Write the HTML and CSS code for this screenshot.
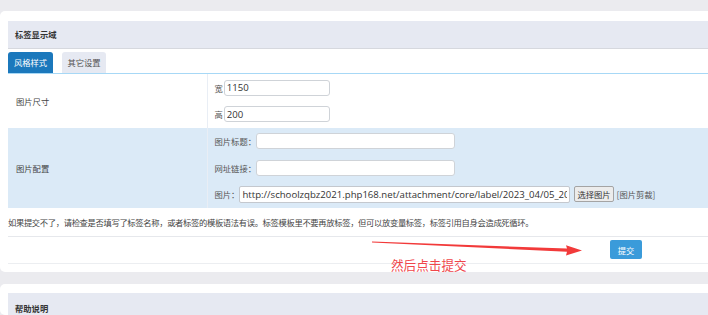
FILE: index.html
```html
<!DOCTYPE html>
<html lang="zh-CN">
<head>
<meta charset="utf-8">
<title>标签显示域</title>
<link rel="stylesheet" href="styles.css">
</head>
<body>
<div class="page">
  <section class="panel">
    <div class="panel-head">标签显示域</div>
    <div class="tabs">
      <div class="tab active">风格样式</div>
      <div class="tab">其它设置</div>
    </div>
    <table class="form">
      <tr class="row-white">
        <td class="label">图片尺寸</td>
        <td class="field">
          <div class="line"><span class="lbl">宽</span><input class="inp inp-sm" type="text" value="1150"></div>
          <div class="line"><span class="lbl">高</span><input class="inp inp-sm" type="text" value="200"></div>
        </td>
      </tr>
      <tr class="row-blue">
        <td class="label">图片配置</td>
        <td class="field">
          <div class="line"><span class="lbl">图片标题：</span><input class="inp inp-md" type="text" value=""></div>
          <div class="line"><span class="lbl">网址链接：</span><input class="inp inp-md" type="text" value=""></div>
          <div class="line"><span class="lbl">图片：</span><input class="inp inp-lg" type="text" value="http://schoolzqbz2021.php168.net/attachment/core/label/2023_04/05_20"><button class="pick" type="button">选择图片</button><span class="crop">[图片剪裁]</span></div>
        </td>
      </tr>
    </table>
    <div class="note">如果提交不了，请检查是否填写了标签名称，或者标签的模板语法有误。标签模板里不要再放标签，但可以放变量标签，标签引用自身会造成死循环。</div>
    <div class="submit-row"><button class="submit" type="button">提交</button></div>
  </section>
  <section class="panel panel-help">
    <div class="panel-head">帮助说明</div>
  </section>

  <svg class="arrow" width="708" height="315" viewBox="0 0 708 315" aria-hidden="true">
    <polygon points="372,241.6 567,248.6 566,245.3 582,250.5 566,255.6 567,251.8 372,242.4" fill="#f23a3a"/>
  </svg>
  <div class="annot">然后点击提交</div>
</div>
</body>
</html>
```
FILE: styles.css
```css
html, body {
  margin: 0;
  padding: 0;
}
body {
  background: #ebebef;
  overflow: hidden;
  font-family: "Noto Sans CJK SC", "Noto Sans", sans-serif;
  font-size: 8.3px;
  color: #444;
}
.page {
  position: relative;
  width: 708px;
  height: 315px;
  padding-top: 11px;
  box-sizing: border-box;
  overflow: hidden;
}
.panel {
  background: #fff;
  border-radius: 5px;
  width: 730px;
  padding: 10px 0 8px 8px;
  box-sizing: border-box;
}
.panel-head {
  height: 27px;
  line-height: 27px;
  background: #e6e9f2;
  border-bottom: 1px solid #d6d8de;
  padding-left: 7px;
  font-weight: bold;
  color: #333;
}
.tabs {
  display: flex;
  gap: 9px;
  margin-top: 3px;
  border-bottom: 1px solid #a7d8f6;
}
.tab {
  width: 44px;
  height: 21px;
  line-height: 21px;
  text-align: center;
  background: #e6e9f2;
  color: #555;
  border-radius: 3px 3px 0 0;
}
.tab.active {
  width: 45px;
  background: #1b78bc;
  color: #fff;
}
.form {
  width: 100%;
  border-collapse: collapse;
}
.form td {
  padding: 0;
  vertical-align: middle;
}
.row-white { background: #fff; }
.row-blue { background: #dbeaf7; }
.row-white td { height: 54px; }
.row-blue td { height: 79px; }
.label {
  width: 199px;
  padding-left: 8px !important;
  box-sizing: border-box;
  color: #444;
}
.field {
  border-left: 1px solid #e9eef5;
  padding-left: 7px !important;
}
.line {
  display: flex;
  align-items: center;
  height: 26.5px;
  color: #555;
}
.lbl { white-space: nowrap; }
.inp {
  box-sizing: border-box;
  height: 16px;
  margin: 0;
  padding: 0 2px;
  border: 1px solid #cfd3d8;
  border-radius: 3px;
  background: #fff;
  font-family: "Open Sans", "Noto Sans", sans-serif;
  font-size: 9.6px;
  color: #333;
  outline: none;
}
.inp-sm { width: 106px; margin-left: 1px; }
.inp-md { width: 199px; margin-left: 0; }
.inp-lg {
  width: 331px;
  height: 17px;
  margin-left: 0;
  border-color: #c4c8ce;
  border-radius: 2px;
}
.pick {
  margin: 0 0 0 4px;
  height: 16px;
  padding: 0 2px;
  border: 1px solid #a4a4a4;
  border-radius: 2px;
  background: #ececec;
  font-family: "Noto Sans CJK SC", sans-serif;
  font-size: 8.3px;
  color: #333;
  line-height: 14px;
}
.crop {
  margin-left: 3px;
  color: #555;
}
.note {
  height: 28px;
  line-height: 28px;
  border-bottom: 1px solid #e6e8ec;
  white-space: nowrap;
  font-size: 8.3px;
  letter-spacing: -0.34px;
  color: #444;
}
.submit-row {
  height: 26px;
  border-bottom: 1px solid #eceef1;
  padding-left: 602px;
  display: flex;
  align-items: center;
}
.submit {
  width: 32px;
  height: 19px;
  margin: 0;
  padding: 0;
  border: 0;
  border-radius: 2px;
  background: #3a9bda;
  color: #fff;
  font-family: "Noto Sans CJK SC", sans-serif;
  font-size: 8.3px;
}
.panel-help {
  margin-top: 12px;
  padding-top: 9px;
  padding-bottom: 0;
  height: 31px;
  overflow: hidden;
}
.panel-help .panel-head {
  height: 22px;
  line-height: 30px;
  border-bottom: 0;
}
.arrow {
  position: absolute;
  left: 0;
  top: 0;
  pointer-events: none;
}
.annot {
  position: absolute;
  left: 391px;
  top: 257px;
  font-size: 12.6px;
  line-height: 1.2;
  color: #f0464b;
  white-space: nowrap;
}
```
